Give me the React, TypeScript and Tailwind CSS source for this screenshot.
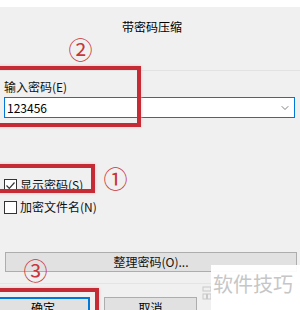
import { ChevronDown } from "lucide-react";

const FONT = { fontFamily: '"Noto Sans CJK SC", "Noto Sans", sans-serif' };

function Circled({ n, className }: { n: string; className: string }) {
  return (
    <div className={`absolute w-[23px] h-[21px] rounded-full border-[1.5px] border-[#c8353a] flex items-center justify-center text-[15px] leading-none text-[#c8353a] ${className}`}>
      {n}
    </div>
  );
}

function Check({ checked, label }: { checked?: boolean; label: string }) {
  return (
    <div className="flex items-center h-[22px] pl-[4px] gap-[3px]">
      <div className="w-[13px] h-[13px] border border-[#333] bg-white flex items-center justify-center">
        {checked && (
          <svg width="11" height="11" viewBox="0 0 11 11">
            <path d="M1.5 5.5 L4.3 8.3 L9.5 2.5" fill="none" stroke="#333" strokeWidth="1.2" />
          </svg>
        )}
      </div>
      <span className="text-[12px] leading-[16px] text-[#111]">{label}</span>
    </div>
  );
}

export default function App() {
  return (
    <div className="relative w-[300px] h-[310px] overflow-hidden bg-[#f0f0f0]" style={FONT}>
      <div className="h-[7px] bg-white" />
      <div className="pt-[12px] text-center text-[12px] leading-[16px] text-black pl-[4px]">带密码压缩</div>
      <div className="mt-[35px] h-px bg-[#e2e2e2]" />

      <div className="mt-[8px] pl-[4px] text-[12px] leading-[16px] text-[#111]">输入密码(E)</div>
      <div className="mt-[2px] mx-[4px] mr-[5px] h-[21px] border border-[#0078d7] bg-white flex items-center justify-between pl-[2px] pr-[3px]">
        <span className="text-[12px] leading-none text-black">123456</span>
        <ChevronDown className="w-[12px] h-[12px] text-[#555]" strokeWidth={1.5} />
      </div>

      <div className="mt-[56px]">
        <Check checked label="显示密码(S)" />
        <Check label="加密文件名(N)" />
      </div>

      <div className="mt-[34px] ml-[5px] mr-[3px] h-[20px] border border-[#adadad] bg-[#e1e1e1] flex items-center justify-center text-[12px] text-[#111]">
        整理密码(O)...
      </div>
      <div className="mt-[11px] h-px bg-[#e4e4e4]" />

      <div className="mt-[13px] flex gap-[14px]">
        <div className="ml-[-4px] w-[94px] h-[22px] border-2 border-[#0078d7] bg-[#e1e1e1] flex justify-center pt-[1px] text-[12px] leading-[16px] text-black">确定</div>
        <div className="w-[93px] h-[22px] border border-[#adadad] bg-[#e1e1e1] flex justify-center pt-[2px] text-[12px] leading-[16px] text-black">取消</div>
      </div>

      {/* annotations */}
      <div className="absolute left-[-4px] top-[66px] w-[145px] h-[61px] border-[4px] border-[#c42b35] shadow-[0_0_3px_#f3b8bb]" />
      <div className="absolute left-[-4px] top-[164px] w-[99px] h-[29px] border-[4px] border-[#c42b35] shadow-[0_0_3px_#f3b8bb]" />
      <div className="absolute left-[-4px] top-[288px] w-[103px] h-[30px] border-[4px] border-[#c42b35] shadow-[0_0_3px_#f3b8bb]" />
      <Circled n="②" className="left-[69px] top-[38px] !border-0 !text-[24px]" />
      <Circled n="①" className="left-[104px] top-[167px] !border-0 !text-[24px]" />
      <Circled n="③" className="left-[24px] top-[259px] !border-0 !text-[24px]" />

      {/* watermark */}
      <svg className="absolute left-[202px] top-[286px]" width="10" height="15" viewBox="0 0 10 15">
        <rect x="1" y="1" width="8" height="4" fill="none" stroke="#c8c8c8" />
        <rect x="1" y="8" width="3.5" height="5" fill="none" stroke="#c8c8c8" />
        <rect x="5.5" y="8" width="3.5" height="5" fill="none" stroke="#c8c8c8" />
      </svg>
      <div className="absolute left-[211px] top-[265px] w-[89px] h-[45px] bg-white/95 flex items-start pt-[7px] pl-[2px]">
        <span className="text-[20px] leading-[24px] text-[#c6c6c6] tracking-[0px]">软件技巧</span>
      </div>
    </div>
  );
}
